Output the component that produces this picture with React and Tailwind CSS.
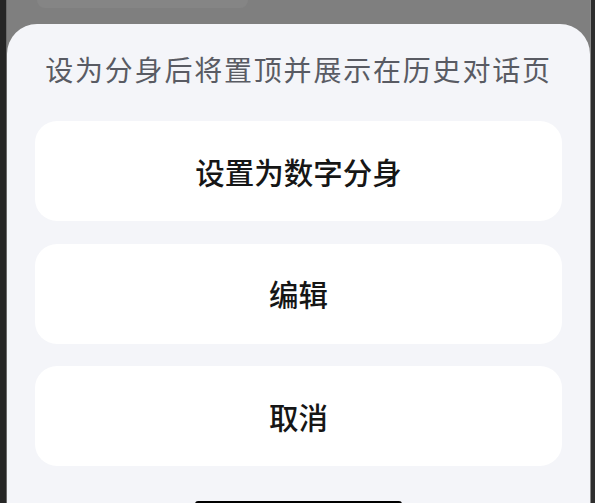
export default function App() {
    return (
        <div className="w-[595px] h-[503px] overflow-hidden flex bg-[#7f7f7f]" style={{ fontFamily: '"Noto Sans CJK SC", "Noto Sans", sans-serif' }}>
            {/* left frame edge */}
            <div className="w-[6px] h-full bg-[#262626]" />
            <div className="w-[1px] h-full bg-[#6a6a6a]" />

            <div className="flex-1 flex flex-col">
                {/* dimmed background above sheet */}
                <div className="h-[24px] shrink-0">
                    <div className="ml-[30px] w-[211px] h-[8px] rounded-b-[14px] bg-[#858585]" />
                </div>

                {/* bottom sheet */}
                <div className="flex-1 bg-[#f4f5f9] rounded-t-[30px] px-[28px] flex flex-col">
                    <p className="pt-[31px] text-center text-[28px] leading-[28px] tracking-[1.8px] text-[#595b63]">
                        设为分身后将置顶并展示在历史对话页
                    </p>

                    <div className="mt-[38px] flex flex-col gap-[22.5px]">
                        {["设置为数字分身", "编辑", "取消"].map((label, i) => (
                            <button
                                key={i}
                                className="h-[100px] w-full rounded-[22px] bg-white flex items-center justify-center text-[29.5px] font-medium text-[#161616]"
                            >
                                {label}
                            </button>
                        ))}
                    </div>

                    <div className="mt-[35px] mx-auto w-[207px] h-[6px] rounded-full bg-black" />
                </div>
            </div>

            {/* right frame edge */}
            <div className="w-[1px] h-full bg-[#8a8a8a]" />
            <div className="w-[4px] h-full bg-[#2e2e2e]" />
        </div>
    );
}
